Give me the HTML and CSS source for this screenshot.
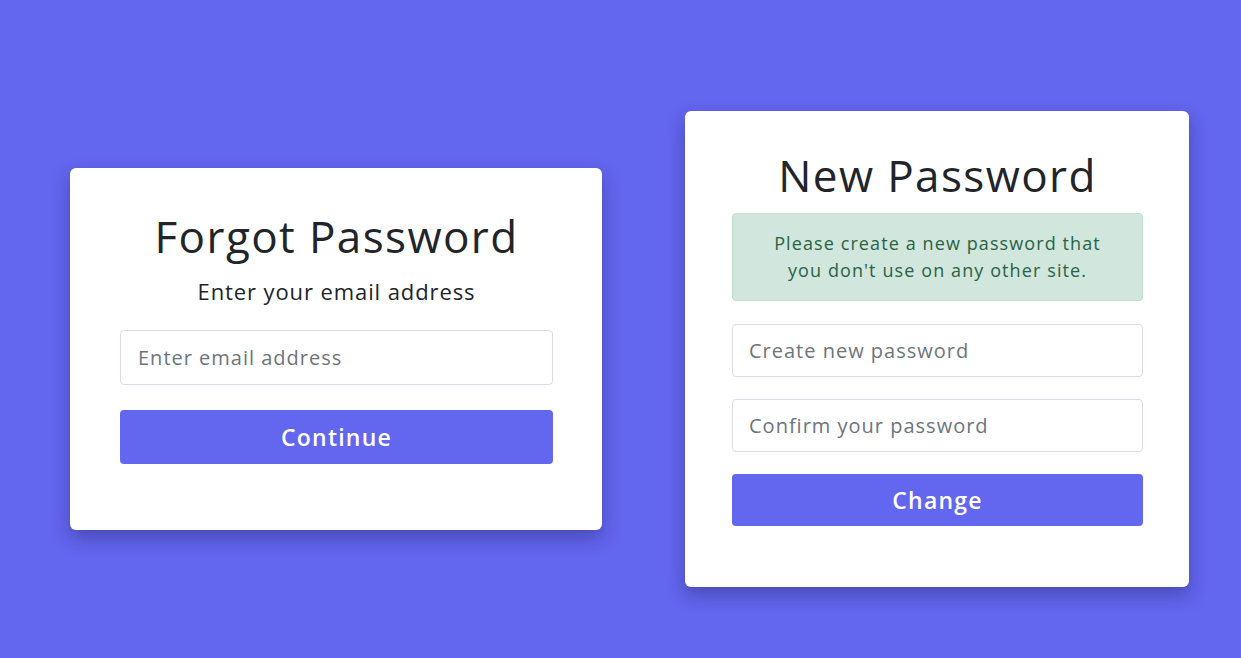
FILE: index.html
```html
<!DOCTYPE html>
<html lang="en">
	<head>
		<meta charset="utf-8" />
		<title>Reset Password</title>
		<link rel="stylesheet" href="styles.css">
	</head>

	<body>
		<main class="page">
			<section class="card card-forgot">
				<h1 class="card-title">Forgot Password</h1>
				<p class="card-subtitle">Enter your email address</p>
				<form class="card-form">
					<input class="field" type="email" placeholder="Enter email address">
					<button class="btn" type="button">Continue</button>
				</form>
			</section>

			<section class="card card-new">
				<h1 class="card-title">New Password</h1>
				<div class="alert">
					Please create a new password that<br>
					you don't use on any other site.
				</div>
				<form class="card-form">
					<input class="field" type="password" placeholder="Create new password">
					<input class="field" type="password" placeholder="Confirm your password">
					<button class="btn" type="button">Change</button>
				</form>
			</section>
		</main>
	</body>
</html>
```

FILE: styles.css
```css
body{
	margin: 0;
	background-color: #6366ee;
	font-family: "Open Sans", "Noto Sans", sans-serif;
	color: #212529;
}

.page{
	display: flex;
	align-items: center;
	gap: 83px;
	min-height: 658px;
	box-sizing: border-box;
	padding: 40px 0 0 70px;
}

.card{
	background-color: #fff;
	border-radius: 6px;
	box-shadow: 0 8px 18px rgba(30, 30, 90, 0.38);
	box-sizing: border-box;
}

.card-forgot{
	width: 532px;
	height: 362px;
	padding: 40px 49px 0 50px;
}

.card-new{
	width: 504px;
	height: 476px;
	padding: 36px 46px 0 47px;
}

.card-title{
	margin: 0;
	font-size: 44px;
	font-weight: 400;
	letter-spacing: 1.4px;
	line-height: 56px;
	text-align: center;
}

.card-subtitle{
	margin: 12px 0 24px;
	font-size: 22px;
	letter-spacing: 0.9px;
	line-height: 30px;
	text-align: center;
}

.card-form{
	display: flex;
	flex-direction: column;
}

.card-forgot .card-form{
	gap: 25px;
}

.card-new .card-form{
	gap: 22px;
}

.field{
	height: 55px;
	border: 1px solid #dadde1;
	border-radius: 4px;
	padding: 0 17px;
	font-family: inherit;
	font-size: 20px;
	letter-spacing: 1px;
	color: #212529;
	box-sizing: border-box;
}

.card-new .field{
	height: 53px;
	padding: 0 16px;
}

.field::placeholder{
	color: #6c757d;
}

.btn{
	height: 54px;
	border: none;
	border-radius: 4px;
	background-color: #6366ee;
	color: #fff;
	font-family: inherit;
	font-size: 23px;
	font-weight: 600;
	letter-spacing: 1.2px;
}

.card-new .btn{
	height: 52px;
}

.alert{
	margin: 10px 0 23px;
	padding: 16px 10px;
	background-color: #d1e7dd;
	border: 1px solid #c0dfcf;
	border-radius: 4px;
	color: #2a6245;
	font-size: 18px;
	letter-spacing: 1.1px;
	line-height: 27px;
	text-align: center;
}
```
